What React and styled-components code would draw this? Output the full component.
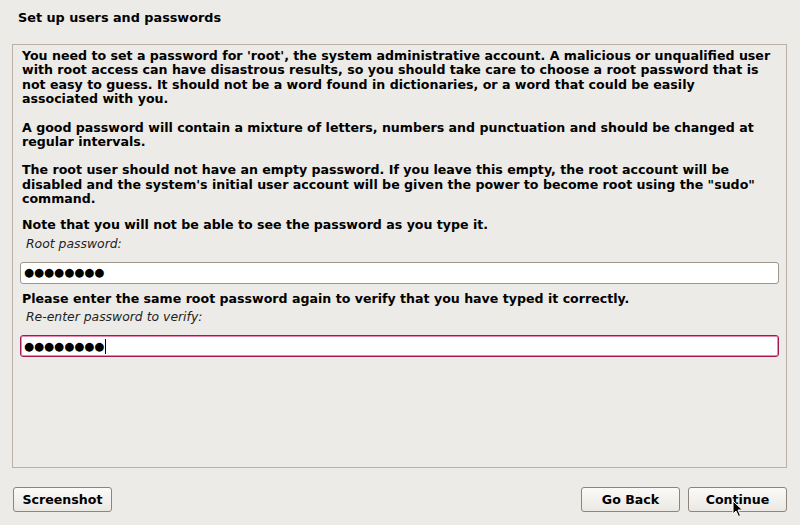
import React from "react";
import styled, { createGlobalStyle } from "styled-components";

const Global = createGlobalStyle`
	html, body {
		margin: 0;
		padding: 0;
		background: #edebe7;
	}
	body {
		font-family: "DejaVu Sans", "Liberation Sans", sans-serif;
		color: #000;
	}
`;

const Page = styled.div`
	width: 800px;
	height: 525px;
	display: flex;
	flex-direction: column;
	background: #edebe7;
	position: relative;
	overflow: hidden;
`;

const Title = styled.h1`
	margin: 0;
	padding: 11px 18px 0;
	height: 44px;
	box-sizing: border-box;
	font-size: 12.8px;
	line-height: 14px;
	font-weight: bold;
`;

const Panel = styled.div`
	margin: 0 13px 0 12px;
	height: 424px;
	box-sizing: border-box;
	border: 1px solid #bab2a9;
	padding: 4px 7px;
	display: flex;
	flex-direction: column;
`;

const Para = styled.p`
	margin: ${(p) => p.top ?? 0}px 0 ${(p) => p.gap ?? 14}px;
	padding-left: 2px;
	font-size: 12.6px;
	line-height: 14.4px;
	font-weight: bold;
	white-space: nowrap;
`;

const Label = styled.div`
	padding-left: 6px;
	margin-top: ${(p) => p.top ?? 0}px;
	font-size: 12.4px;
	line-height: 14px;
	font-style: italic;
	color: #222;
`;

const Field = styled.div`
	margin-top: 11px;
	height: 22px;
	box-sizing: border-box;
	border-radius: 3px;
	background: #fff;
	border: 1px solid ${(p) => (p.focused ? "#a8164f" : "#9e968c")};
	box-shadow: ${(p) => (p.focused ? "inset 0 0 0 1px #e88ab0" : "none")};
	display: flex;
	align-items: center;
	padding-left: 3px;
`;

const Dots = styled.span`
	font-size: 11.5px;
	line-height: 1;
`;

const Caret = styled.span`
	width: 1px;
	height: 15px;
	background: #000;
	margin-left: 1px;
`;

const BottomBar = styled.div`
	display: flex;
	align-items: center;
	padding: 19px 13px 0 13px;
	gap: 8px;
`;

const Spacer = styled.div`
	flex: 1;
`;

const Button = styled.button`
	width: 99px;
	height: 25px;
	box-sizing: border-box;
	border: 1px solid #8d857b;
	border-radius: 3px;
	background: linear-gradient(#fbfaf9, #ebe8e3);
	font-family: "DejaVu Sans", "Liberation Sans", sans-serif;
	font-size: 12.6px;
	font-weight: bold;
	color: #000;
	padding: 0;
`;

const Pointer = styled.svg`
	position: absolute;
	left: 732px;
	top: 500px;
`;

const Password = ({ focused }) => (
	<Field focused={focused}>
		<Dots>●●●●●●●●</Dots>
		{focused && <Caret />}
	</Field>
);

const App = () => {
	return (
		<Page>
			<Global />
			<Title>Set up users and passwords</Title>
			<Panel>
				<Para>
					You need to set a password for 'root', the system administrative account. A malicious or unqualified user
					<br />
					with root access can have disastrous results, so you should take care to choose a root password that is
					<br />
					not easy to guess. It should not be a word found in dictionaries, or a word that could be easily
					<br />
					associated with you.
				</Para>
				<Para>
					A good password will contain a mixture of letters, numbers and punctuation and should be changed at
					<br />
					regular intervals.
				</Para>
				<Para gap={11}>
					The root user should not have an empty password. If you leave this empty, the root account will be
					<br />
					disabled and the system's initial user account will be given the power to become root using the "sudo"
					<br />
					command.
				</Para>
				<Para gap={0}>
					Note that you will not be able to see the password as you type it.
				</Para>
				<Label top={5}>Root password:</Label>
				<Password />
				<Para gap={0} top={8}>
					Please enter the same root password again to verify that you have typed it correctly.
				</Para>
				<Label top={4}>Re-enter password to verify:</Label>
				<Password focused />
			</Panel>
			<BottomBar>
				<Button>Screenshot</Button>
				<Spacer />
				<Button>Go Back</Button>
				<Button>Continue</Button>
			</BottomBar>
			<Pointer width="12" height="18" viewBox="0 0 12 18">
				<path d="M1 1 L1 14 L4 11 L6.5 16.5 L8.5 15.5 L6 10 L10.5 10 Z" fill="#000" stroke="#fff" strokeWidth="1" />
			</Pointer>
		</Page>
	);
};

export default App;
